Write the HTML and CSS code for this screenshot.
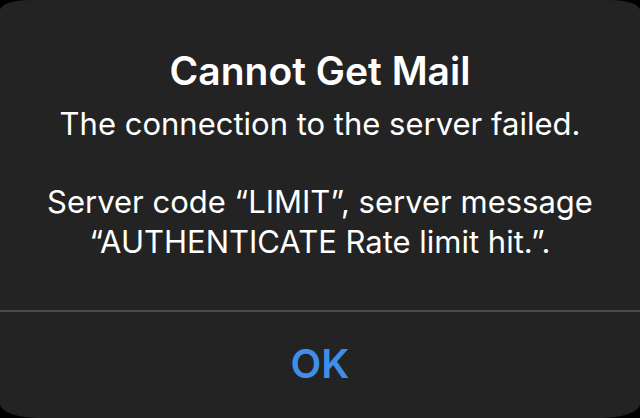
FILE: index.html
```html
<!DOCTYPE html>
<html>
<head>
<meta charset="utf-8">
<link rel="stylesheet" href="styles.css">
</head>
<body>
<div class="alert">
  <div class="content">
    <h1 class="title">Cannot Get Mail</h1>
    <p class="message">The connection to the server failed.</p>
    <p class="message detail">Server code “LIMIT”, server message “AUTHENTICATE Rate limit hit.”.</p>
  </div>
  <div class="separator"></div>
  <div class="actions">
    <span class="ok">OK</span>
  </div>
</div>
</body>
</html>
```
FILE: styles.css
```css
html, body {
  margin: 0;
  padding: 0;
  background: #000;
}
body {
  width: 640px;
  height: 418px;
  overflow: hidden;
  font-family: Inter, "Noto Sans", sans-serif;
}
.alert {
  width: 640px;
  height: 418px;
  background: #232323;
  border-radius: 30px 30px 40px 40px / 10px 10px 14px 14px;
  display: flex;
  flex-direction: column;
  color: #fff;
}
.content {
  height: 310px;
  padding-top: 48px;
  box-sizing: border-box;
  text-align: center;
}
.title {
  margin: 0;
  font-size: 39px;
  line-height: 46px;
  font-weight: 600;
}
.message {
  margin: 10px 0 0;
  font-size: 31px;
  line-height: 40px;
  font-weight: 400;
  padding: 0 36px;
}
.detail {
  margin-top: 38px;
}
.separator {
  height: 2px;
  background: #4a4a4a;
}
.actions {
  flex: 1;
  display: flex;
  align-items: center;
  justify-content: center;
}
.ok {
  color: #3f8ee8;
  font-size: 40px;
  font-weight: 600;
  margin-bottom: 4px;
}
```
